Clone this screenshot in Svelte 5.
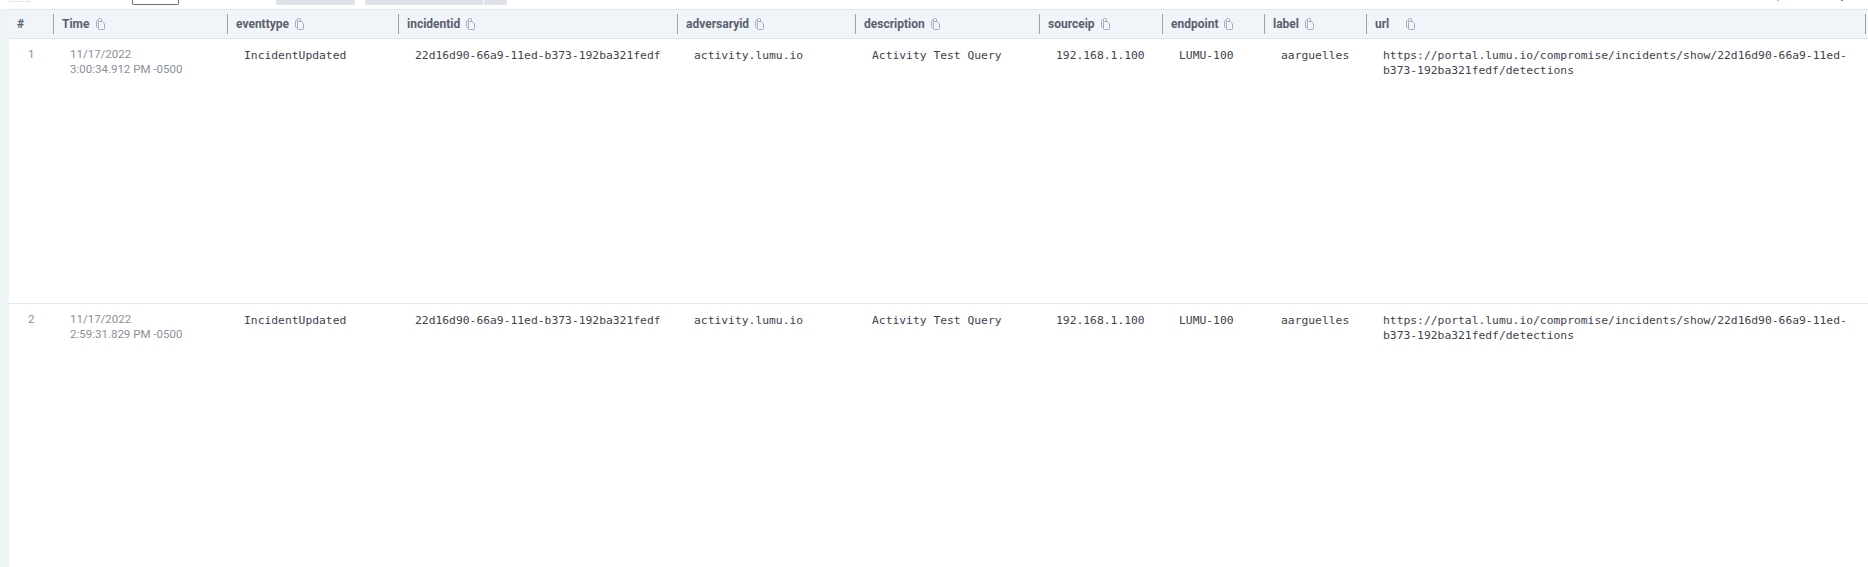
<script>
  const columns = [
    { name: 'Time', width: 174 },
    { name: 'eventtype', width: 171 },
    { name: 'incidentid', width: 279 },
    { name: 'adversaryid', width: 178 },
    { name: 'description', width: 184 },
    { name: 'sourceip', width: 123 },
    { name: 'endpoint', width: 102 },
    { name: 'label', width: 102 },
    { name: 'url', width: 499, wide: true }
  ];
  const base = {
    eventtype: 'IncidentUpdated',
    incidentid: '22d16d90-66a9-11ed-b373-192ba321fedf',
    adversaryid: 'activity.lumu.io',
    description: 'Activity Test Query',
    sourceip: '192.168.1.100',
    endpoint: 'LUMU-100',
    label: 'aarguelles',
    url: 'https://portal.lumu.io/compromise/incidents/show/22d16d90-66a9-11ed-b373-192ba321fedf/detections'
  };
  const rows = [
    { n: 1, date: '11/17/2022', time: '3:00:34.912 PM -0500', ...base },
    { n: 2, date: '11/17/2022', time: '2:59:31.829 PM -0500', ...base }
  ];
  const fields = ['eventtype', 'incidentid', 'adversaryid', 'description', 'sourceip', 'endpoint', 'label', 'url'];
</script>

<div class="page">
  <div class="toolbar">
    <span class="tool-check"></span>
    <span class="tool-select"></span>
    <span class="pill first"></span>
    <span class="pill second"></span>
    <span class="pill third"></span>
    <span class="tick one"></span>
    <span class="tick two"></span>
  </div>

  <div class="content">
    <table>
      <colgroup>
        <col class="num-col" />
        {#each columns as c}
          <col style="width:{c.width}px" />
        {/each}
        <col />
      </colgroup>
      <thead>
        <tr>
          <th class="num-head">#</th>
          {#each columns as c}
            <th>
              <div class="head" class:wide={c.wide}>
                <span>{c.name}</span>
                <svg class="copy" viewBox="0 0 9 12" width="9" height="12" aria-hidden="true">
                  <path d="M2.5 9.5H1.3a.8.8 0 0 1-.8-.8V3.3c0-.5.3-.8.8-.8h1.2" fill="none" stroke="currentColor" stroke-width="1" />
                  <path d="M2.5 3.5V1.3c0-.5.3-.8.8-.8h1.4c.5 0 .8.3.8.8v2.2" fill="none" stroke="currentColor" stroke-width="1" />
                  <path d="M3.3 3.5h3l2.2 2.2v5c0 .5-.3.8-.8.8H3.3a.8.8 0 0 1-.8-.8V4.3c0-.5.3-.8.8-.8z" fill="none" stroke="currentColor" stroke-width="1" />
                </svg>
              </div>
            </th>
          {/each}
          <th class="end"><div class="head"></div></th>
        </tr>
      </thead>
      <tbody>
        {#each rows as r}
          <tr>
            <td class="num">{r.n}</td>
            <td class="time">{r.date}<br />{r.time}</td>
            {#each fields as f}
              <td class="mono">{r[f]}</td>
            {/each}
            <td></td>
          </tr>
        {/each}
      </tbody>
    </table>
  </div>
</div>

<style>
  :global(body) {
    margin: 0;
    background: #fff;
  }
  .page {
    width: 1868px;
    height: 567px;
    overflow: hidden;
    font-family: Roboto, "Liberation Sans", sans-serif;
    background: linear-gradient(#fff, #fff) 0 0 / 100% 9px no-repeat, linear-gradient(90deg, #eef3f5 9px, #fff 9px);
  }
  .toolbar {
    position: relative;
    height: 9px;
    display: flex;
    align-items: flex-start;
    padding-left: 9px;
  }
  .tool-check {
    width: 21px;
    height: 2px;
    box-sizing: border-box;
    border: 1px solid #e4e7ec;
    border-top: 0;
    margin-right: 102px;
  }
  .tool-select {
    width: 47px;
    height: 5px;
    box-sizing: border-box;
    border: 1px solid #69707d;
    border-top: 0;
    border-radius: 0 0 2px 2px;
    margin-right: 97px;
  }
  .pill {
    height: 5px;
    background: #dde2e9;
    border-radius: 0 0 2px 2px;
  }
  .pill.first { width: 79px; margin-right: 10px; }
  .pill.second { width: 118px; margin-right: 1px; border-radius: 0 0 0 2px; }
  .pill.third { width: 23px; border-radius: 0 0 2px 0; }
  .tick {
    position: absolute;
    top: 0;
    width: 2px;
    height: 1px;
  }
  .tick.one { left: 1777px; background: #9cc4ee; }
  .tick.two { left: 1841px; background: #3aa0ec; }

  .content {
    margin-left: 9px;
  }
  table {
    border-collapse: separate;
    border-spacing: 0;
    table-layout: fixed;
    width: 1859px;
  }
  .num-col { width: 44px; }
  thead th {
    height: 28px;
    padding: 0;
    background: #f1f4f8;
    border-top: 1px solid #e0e5ec;
    border-bottom: 1px solid #dfe4ea;
    text-align: left;
    font-size: 12px;
    font-weight: 700;
    color: #5a606d;
    line-height: 15px;
  }
  .num-head {
    padding-left: 8px;
  }
  .head {
    display: flex;
    align-items: center;
    height: 20px;
    padding-left: 8px;
    border-left: 1px solid #98a2b3;
  }
  .copy {
    flex: none;
    margin-left: 6px;
    color: #a3acba;
  }
  .head.wide .copy {
    margin-left: 17px;
  }
  tbody td {
    vertical-align: top;
    height: 265px;
    box-sizing: border-box;
    padding: 9px 8px 0 17px;
    font-size: 11.33px;
    line-height: 15px;
    color: #3f434e;
    border-bottom: 1px solid #e4e7ec;
  }
  tbody tr:last-child td {
    border-bottom: 0;
  }
  td.num {
    padding-left: 19px;
    padding-top: 8px;
    font-size: 11.5px;
    color: #8b8f98;
  }
  td.time {
    padding-top: 8px;
    font-size: 11.5px;
    color: #8b8f98;
  }
  td.mono {
    font-family: "DejaVu Sans Mono", "Liberation Mono", monospace;
  }
</style>
